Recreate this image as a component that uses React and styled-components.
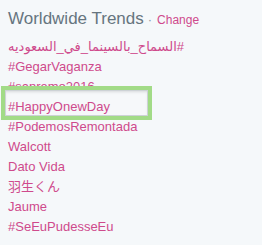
import React from "react";
import styled, { createGlobalStyle } from "styled-components";

const Global = createGlobalStyle`
  html, body { margin: 0; padding: 0; background: #F5F8FA; }
  body { font-family: "Liberation Sans", "DejaVu Sans", "Noto Sans CJK JP", sans-serif; }
`;

const Panel = styled.section`
  width: 262px;
  height: 245px;
  box-sizing: border-box;
  padding: 7px 8px 0 8px;
  background: #F5F8FA;
  overflow: hidden;
`;

const Header = styled.h3`
  margin: 0 0 5px 0;
  font-size: 17px;
  line-height: 24px;
  font-weight: normal;
  color: #66757F;
  white-space: nowrap;
`;

const Dot = styled.span`
  font-size: 13px;
  color: #8899A6;
  margin: 0 5px 0 4px;
`;

const ChangeLink = styled.a`
  font-size: 12px;
  color: #CF4A8C;
  text-decoration: none;
`;

const List = styled.ul`
  list-style: none;
  margin: 0;
  padding: 0;
`;

const Item = styled.li`
  position: relative;
  font-size: 13px;
  line-height: 20px;
  height: 20px;
  color: #CF4A8C;
  white-space: nowrap;
  ${(p) =>
    p.$highlight &&
    `
    z-index: 1;
    &::before {
      content: "";
      position: absolute;
      z-index: -1;
      left: -7px;
      top: -11px;
      width: 151px;
      height: 34px;
      box-sizing: border-box;
      border: 4px solid #A2DB87;
      background: #F6F8FA;
      box-shadow: inset 0 0 0 1px #CDD2D6, inset 0 2px 3px rgba(0,0,0,0.12);
    }
  `}
`;

const trends = [
  { t: "#السماح_بالسينما_في_السعوديه", rtl: true },
  { t: "#GegarVaganza" },
  { t: "#sanremo2016" },
  { t: "#HappyOnewDay", hl: true },
  { t: "#PodemosRemontada" },
  { t: "Walcott" },
  { t: "Dato Vida" },
  { t: "羽生くん" },
  { t: "Jaume" },
  { t: "#SeEuPudesseEu" },
];

export default function App() {
  return (
    <>
      <Global />
      <Panel>
        <Header>
          Worldwide Trends<Dot>·</Dot>
          <ChangeLink href="#">Change</ChangeLink>
        </Header>
        <List>
          {trends.map((x, i) => (
            <Item key={i} $highlight={x.hl}>
              {x.rtl ? <span dir="rtl">{x.t}</span> : x.t}
            </Item>
          ))}
        </List>
      </Panel>
    </>
  );
}
